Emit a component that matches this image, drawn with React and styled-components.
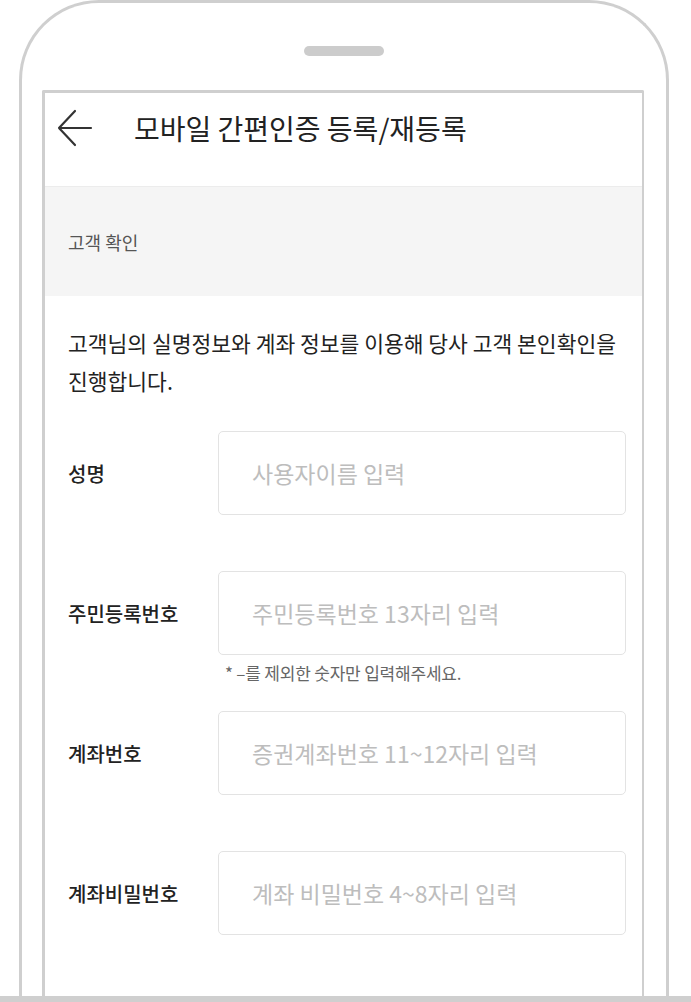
import React from 'react';
import styled, { createGlobalStyle } from 'styled-components';

const GlobalStyle = createGlobalStyle`
  html, body {
    margin: 0;
    padding: 0;
    background: #fff;
  }
  body {
    font-family: "Noto Sans CJK KR", "Noto Sans", sans-serif;
    color: #222;
  }
  * { box-sizing: border-box; }
`;

const Page = styled.div`
  width: 691px;
  height: 1002px;
  display: flex;
  flex-direction: column;
  overflow: hidden;
`;

const Phone = styled.div`
  width: 650px;
  height: 996px;
  margin-left: 19px;
  border: 3px solid #cfcfcf;
  border-bottom: none;
  border-radius: 80px 80px 0 0;
  display: flex;
  flex-direction: column;
  align-items: flex-start;
`;

const Speaker = styled.div`
  align-self: center;
  width: 80px;
  height: 10px;
  margin-top: 43px;
  border-radius: 5px;
  background: #cccccc;
`;

const Screen = styled.div`
  margin: 34px 0 0 20px;
  width: 602px;
  flex: 1;
  border: 3px solid #cfcfcf;
  border-right-width: 2px;
  border-bottom: none;
  border-radius: 2px 2px 0 0;
  display: flex;
  flex-direction: column;
`;

const BottomBar = styled.div`
  height: 6px;
  background: #cfcfcf;
`;

const Header = styled.div`
  height: 94px;
  display: flex;
  align-items: flex-start;
  padding: 16px 0 0 12px;
  border-bottom: 1px solid #ececec;
`;

const BackButton = styled.button`
  width: 36px;
  height: 38px;
  padding: 0;
  border: none;
  background: none;
  display: flex;
  color: #333;
`;

const Title = styled.h1`
  margin: 0 0 0 41px;
  font-size: 28px;
  font-weight: 400;
  line-height: 38px;
  color: #222;
`;

const Section = styled.div`
  height: 109px;
  background: #f5f5f5;
  display: flex;
  align-items: center;
  padding-left: 23px;
  font-size: 18px;
  color: #555;
`;

const Body = styled.div`
  padding: 28px 16px 0 23px;
`;

const Intro = styled.p`
  margin: 0 0 31px;
  font-size: 21.5px;
  line-height: 38px;
  color: #222;
  white-space: nowrap;
`;

const Field = styled.div`
  height: 140px;
`;

const Row = styled.div`
  display: flex;
  align-items: center;
  height: 84px;
`;

const Label = styled.label`
  width: 150px;
  font-size: 20px;
  font-weight: 500;
  color: #222;
`;

const Input = styled.input`
  flex: 1;
  height: 84px;
  border: 1px solid #e3e3e3;
  border-radius: 5px;
  padding: 0 0 0 33px;
  font-family: inherit;
  font-size: 23px;
  color: #222;
  outline: none;
  background: #fff;
  &::placeholder {
    color: #bdbdbd;
  }
`;

const Hint = styled.p`
  margin: 7px 0 0 157px;
  font-size: 17px;
  line-height: 22px;
  color: #666;
  letter-spacing: -0.2px;
`;

const fields = [
  { label: '성명', placeholder: '사용자이름 입력' },
  { label: '주민등록번호', placeholder: '주민등록번호 13자리 입력', hint: '* –를 제외한 숫자만 입력해주세요.' },
  { label: '계좌번호', placeholder: '증권계좌번호 11~12자리 입력' },
  { label: '계좌비밀번호', placeholder: '계좌 비밀번호 4~8자리 입력' },
];

const BackIcon = () => (
  <svg width="36" height="38" viewBox="0 0 36 38" fill="none">
    <path d="M18 2 L2 19 L18 36 M2 19 H34" stroke="currentColor" strokeWidth="2.2" strokeLinecap="round" strokeLinejoin="round" />
  </svg>
);

export default function App() {
  return (
    <Page>
      <GlobalStyle />
      <Phone>
        <Speaker />
        <Screen>
          <Header>
            <BackButton aria-label="뒤로">
              <BackIcon />
            </BackButton>
            <Title>모바일 간편인증 등록/재등록</Title>
          </Header>
          <Section>고객 확인</Section>
          <Body>
            <Intro>
              고객님의 실명정보와 계좌 정보를 이용해 당사 고객 본인확인을
              <br />
              진행합니다.
            </Intro>
            {fields.map((f) => (
              <Field key={f.label}>
                <Row>
                  <Label>{f.label}</Label>
                  <Input placeholder={f.placeholder} />
                </Row>
                {f.hint && <Hint>{f.hint}</Hint>}
              </Field>
            ))}
          </Body>
        </Screen>
      </Phone>
      <BottomBar />
    </Page>
  );
}
